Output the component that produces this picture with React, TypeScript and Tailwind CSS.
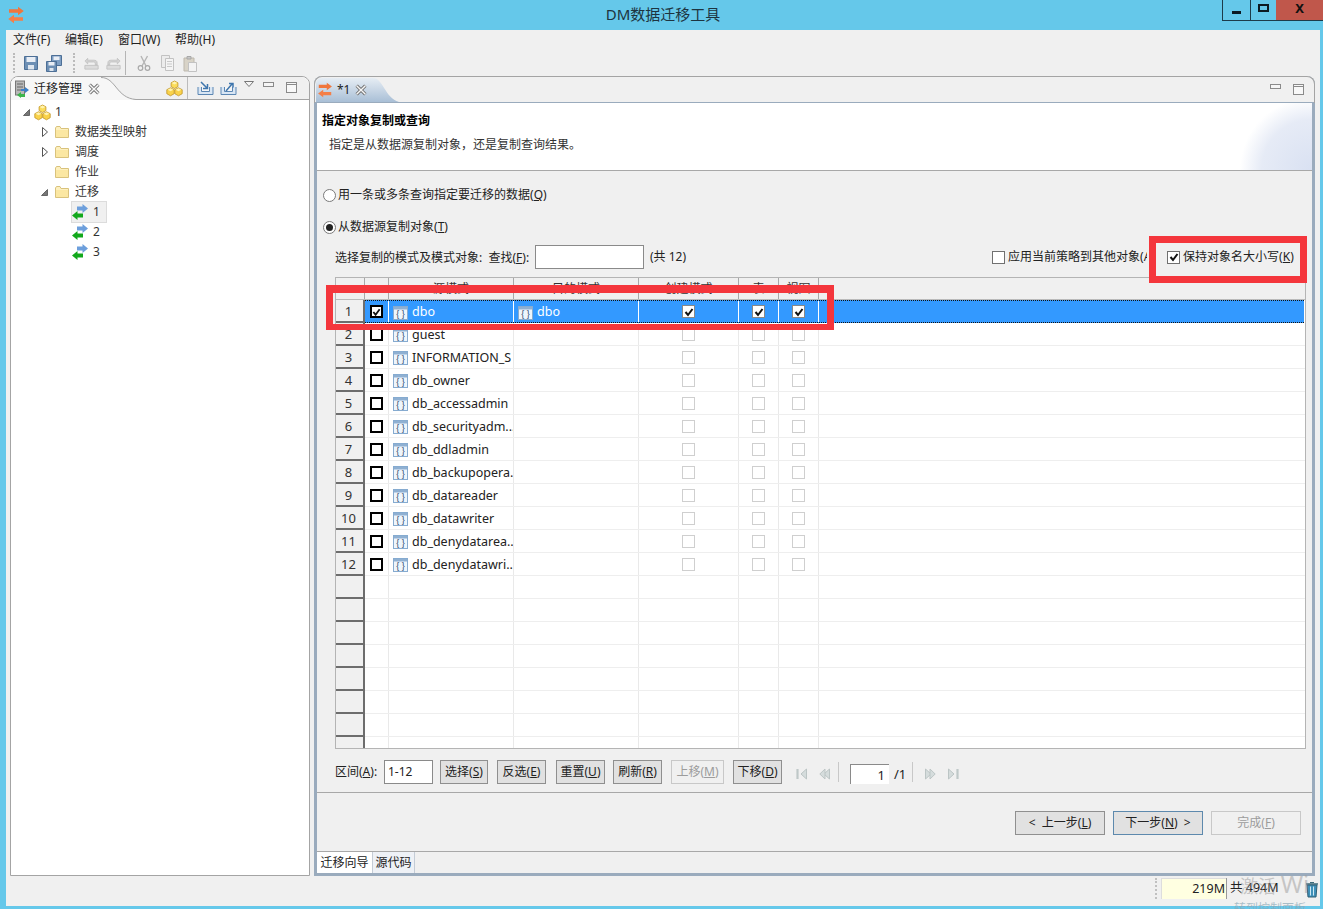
import React from "react";

const Logo = ({ s = 18 }: { s?: number }) => (
  <svg width={s} height={s} viewBox="0 0 18 18">
    <path d="M2 3.200h9V.8L16.800 5 11 9.200V6.800H2z" fill="#f0763c" />
    <path d="M16 11.200H7V8.800L1.200 13 7 17.200v-2.400h9z" fill="#f47f48" />
  </svg>
);

const Folder = () => (
  <svg width="16" height="14" viewBox="0 0 16 14">
    <path d="M1.500 3V12.500H14.500V3.500H7L6 1.500H2.500z" fill="#fdf0bf" stroke="#d9c27c" />
    <path d="M2 5h12v7H2z" fill="#fbe7a2" />
  </svg>
);

const Cubes = () => (
  <svg width="17" height="17" viewBox="0 0 17 16">
    <g stroke="#c09426" strokeWidth=".8">
      <path d="M8.500 .5l3.400 1.800v3.800L8.500 8 5.100 6.100V2.300z" fill="#fbdc5a" />
      <path d="M4.500 7.300l3.700 1.900v4L4.500 15.300.8 13.200v-4z" fill="#f9d24a" />
      <path d="M12.500 7.300l3.700 1.900v4l-3.700 2.100-3.700-2.100v-4z" fill="#f9d24a" />
    </g>
    <path d="M8.500 1l2.800 1.500-2.800 1.500-2.800-1.500zM4.500 7.800l2.900 1.500-2.900 1.500-2.900-1.500zM12.500 7.800l2.900 1.500-2.900 1.500-2.900-1.500z" fill="#fff3b0" />
  </svg>
);

const Migrate = () => (
  <svg width="16" height="16" viewBox="0 0 16 16">
    <path d="M5 2.500h5.500V0L16 4.500 10.500 9V6.500H5z" fill="#6d9fdc" />
    <path d="M11 9.500H5.500V7L0 11.500 5.500 16v-2.500H11z" fill="#12a81c" />
  </svg>
);

const Schema = () => (
  <svg width="15" height="14" viewBox="0 0 15 14">
    <rect x=".5" y=".5" width="14" height="13" fill="#eef5fc" stroke="#86abd0" />
    <rect x="1" y="1" width="13" height="2.500" fill="#8fb0d2" />
    <text x="7.500" y="11" textAnchor="middle" fontSize="9" fontFamily="Liberation Sans" fill="#2c4a6c">{"{ }"}</text>
  </svg>
);

const Save = () => (
  <svg width="16" height="16" viewBox="0 0 16 16">
    <path d="M1.500 1.500H14.500V14.500H1.500z" fill="#6d8fb4" stroke="#4d6f96" />
    <rect x="3.500" y="2" width="9" height="5" fill="#e9eef5" />
    <rect x="5" y="10" width="6" height="4.500" fill="#dfe6ee" />
  </svg>
);

const SaveAll = () => (
  <svg width="18" height="17" viewBox="0 0 18 17">
    <path d="M6.500 .5H16.500V10.500H6.500z" fill="#7e9fc4" stroke="#4d6f96" />
    <rect x="8.500" y="1.500" width="6" height="3.500" fill="#e9eef5" />
    <path d="M1.500 6.500H11.500V16.500H1.500z" fill="#6d8fb4" stroke="#4d6f96" />
    <rect x="3.500" y="7" width="6" height="3.500" fill="#e9eef5" />
    <rect x="4.500" y="13" width="4" height="3" fill="#dfe6ee" />
  </svg>
);

const Undo = ({ flip = false }: { flip?: boolean }) => (
  <svg width="17" height="16" viewBox="0 0 18 16" className={flip ? "-scale-x-100" : ""}>
    <path d="M2 10.500h14v4H2z" fill="#dcdcdc" stroke="#c4c4c4" />
    <path d="M5 3l-3 3 3 3V7h6c1.500 0 2 .7 2 2v1h2V8c0-2.500-1.500-3-4-3H5z" fill="#d2d2d2" stroke="#bcbcbc" strokeWidth=".7" />
  </svg>
);

const Cut = () => (
  <svg width="14" height="17" viewBox="0 0 14 17">
    <path d="M10.500 1L5 11M4 1l5 10" stroke="#b5b5b5" strokeWidth="1.400" fill="none" />
    <circle cx="3.500" cy="13" r="2.300" fill="none" stroke="#a8a8a8" strokeWidth="1.200" />
    <circle cx="10.500" cy="13" r="2.300" fill="none" stroke="#a8a8a8" strokeWidth="1.200" />
  </svg>
);

const Doc = () => (
  <svg width="15" height="16" viewBox="0 0 15 16">
    <path d="M1.500 .5h8v12h-8z" fill="#ececec" stroke="#c2c2c2" />
    <path d="M5.500 3.500h8v12h-8z" fill="#f4f4f4" stroke="#c2c2c2" />
    <path d="M7 6.500h5M7 9h5M7 11.500h5" stroke="#c9c9c9" />
  </svg>
);

const Paste = () => (
  <svg width="14" height="17" viewBox="0 0 14 17">
    <path d="M1 3h10v13H1z" fill="#d8d3c7" stroke="#bdb8ad" />
    <path d="M4 1.500h4V4H4z" fill="#c8c8c8" stroke="#a8a8a8" />
    <path d="M5.500 7.500h8v9h-8z" fill="#f3f3f3" stroke="#c2c2c2" />
  </svg>
);

const Import = ({ up = false }: { up?: boolean }) => (
  <svg width="17" height="16" viewBox="0 0 17 16">
    <path d="M1 7v7.500h15V7" fill="#d9e6f4" stroke="#5b86b3" />
    <path d="M4.500 7v4.500h8V7" fill="#f6f6f6" stroke="#5b86b3" />
    {up ? (
      <path d="M6 11L12 4M9 3.500h4v4" stroke="#3f76ad" strokeWidth="1.500" fill="none" />
    ) : (
      <path d="M4 2l6 6M10.500 4v4.500h-4.500" stroke="#3f76ad" strokeWidth="1.500" fill="none" />
    )}
  </svg>
);

const MinIcon = () => (
  <svg width="11" height="6" viewBox="0 0 11 6">
    <rect x=".5" y=".5" width="10" height="4" fill="#f5f5f5" stroke="#8a8a8a" />
  </svg>
);
const MaxIcon = () => (
  <svg width="11" height="11" viewBox="0 0 11 11">
    <rect x=".5" y=".5" width="10" height="10" fill="#f8f8f8" stroke="#8a8a8a" />
    <path d="M0 2.500h11" stroke="#8a8a8a" />
  </svg>
);
const Close = () => (
  <svg width="12" height="12" viewBox="0 0 11 11">
    <path d="M1.500 1.500l8 8m0-8l-8 8" stroke="#6f6f6f" strokeWidth="3" />
    <path d="M1.500 1.500l8 8m0-8l-8 8" stroke="#f7f7f7" strokeWidth="1.300" />
  </svg>
);

const Server = () => (
  <svg width="16" height="18" viewBox="0 0 16 18">
    <rect x="1.500" y="1" width="9" height="14" fill="#b8b8b8" stroke="#777" />
    <path d="M3 4h6M3 7h6M3 10h6" stroke="#666" />
    <path d="M7 9h4V7l4 3-4 3v-2H7z" fill="#3c80c8" />
    <path d="M11 14H7v-2l-4 3 4 3v-1h4z" fill="#3cb44a" />
  </svg>
);

const Nav = ({ dir }: { dir: "first" | "prev" | "next" | "last" }) => {
  const bar = dir === "first" ? "M1.500 2v10" : dir === "last" ? "M10.500 2v10" : "";
  const left = dir === "first" || dir === "prev";
  return (
    <svg width="12" height="14" viewBox="0 0 12 14">
      {bar && <path d={bar} stroke="#bfc8c8" strokeWidth="2.200" />}
      {left ? (
        <>
          <path d="M10.500 2L5 7l5.500 5z" fill="#d5dcdc" stroke="#bcc5c5" />
          {dir === "prev" && <path d="M6 2L.8 7 6 12z" fill="#d5dcdc" stroke="#bcc5c5" />}
        </>
      ) : (
        <>
          <path d="M1.500 2L7 7l-5.500 5z" fill="#d5dcdc" stroke="#bcc5c5" />
          {dir === "next" && <path d="M6 2l5.200 5L6 12z" fill="#d5dcdc" stroke="#bcc5c5" />}
        </>
      )}
    </svg>
  );
};

const Check = () => (
  <svg width="10" height="10" viewBox="0 0 10 10">
    <path d="M1.500 5l2.500 3 4.500-6" stroke="#111" strokeWidth="2" fill="none" />
  </svg>
);

const BoxBold = ({ on }: { on?: boolean }) => (
  <span className="flex h-[13px] w-[13px] items-center justify-center border-2 border-black bg-white">{on && <Check />}</span>
);
const BoxThin = ({ on }: { on?: boolean }) => (
  <span className={`flex h-[13px] w-[13px] items-center justify-center border bg-white ${on ? "border-[#888]" : "border-[#cfcfcf]"}`}>{on && <Check />}</span>
);
const FormBox = ({ on }: { on?: boolean }) => (
  <span className="flex h-[13px] w-[13px] shrink-0 items-center justify-center border border-[#707070] bg-white">{on && <Check />}</span>
);

const Radio = ({ on }: { on?: boolean }) => (
  <span className="flex h-[13px] w-[13px] shrink-0 items-center justify-center rounded-full border border-[#7a7a7a] bg-white">
    {on && <span className="h-[7px] w-[7px] rounded-full bg-[#222]" />}
  </span>
);

const Mn = ({ a, k }: { a: string; k: string }) => (
  <span>
    {a}(<u>{k}</u>)
  </span>
);

const Btn = ({ x, k, w, off, first, tail, blue }: { x: string; k: string; w: string; off?: boolean; first?: string; tail?: string; blue?: boolean }) => (
  <span
    className={`flex h-6 items-center justify-center whitespace-pre border text-xs ${w} ${
      off ? "border-[#c8c8c8] bg-[#f0f0f0] text-[#9c9c9c]" : blue ? "border-[#5d89ad] bg-[#e1e1e1] text-[#222]" : "border-[#8f8f8f] bg-[#e1e1e1] text-[#222]"
    }`}
  >
    {first}
    <Mn a={x} k={k} />
    {tail}
  </span>
);

const names = ["dbo", "guest", "INFORMATION_S", "db_owner", "db_accessadmin", "db_securityadm...", "db_ddladmin", "db_backupopera..", "db_datareader", "db_datawriter", "db_denydatarea..", "db_denydatawri..."];
const rows = Array.from({ length: 20 }, (_, i) => i);

const Cell = ({ w, children, sel, center }: { w: string; children?: React.ReactNode; sel?: boolean; center?: boolean }) => (
  <div className={`flex h-full shrink-0 items-center overflow-hidden whitespace-nowrap border-r ${w} ${center ? "justify-center" : ""} ${sel ? "border-white" : "border-[#e9e9e9]"}`}>{children}</div>
);

const Tree = ({ pad, twist, icon, label, sel }: { pad: string; twist?: "open" | "closed"; icon: React.ReactNode; label: string; sel?: boolean }) => (
  <div className={`flex h-5 items-center ${pad}`}>
    <span className="flex w-[11px] shrink-0 justify-center">
      {twist === "open" && (
        <svg width="7" height="7" viewBox="0 0 7 7"><path d="M6.500 .5V6.500H.5z" fill="#777" stroke="#666" /></svg>
      )}
      {twist === "closed" && (
        <svg width="6" height="10" viewBox="0 0 6 10"><path d="M.5 .5L5.500 5 .5 9.500z" fill="#fff" stroke="#555" /></svg>
      )}
    </span>
    <span className={`flex h-5 items-center gap-[5px] pr-[6px] ${sel ? "bg-[#f0f0f0] outline outline-[#dcdcdc]" : ""}`}>
      {icon}
      <span className="text-xs text-[#333]">{label}</span>
    </span>
  </div>
);

export default function App() {
  return (
    <div className="relative flex h-[909px] w-[1323px] flex-col overflow-hidden bg-[#65c8ea] font-['Noto_Sans','Noto_Sans_CJK_SC',sans-serif] text-xs text-[#222]">
      {/* title bar */}
      <div className="grid h-[30px] shrink-0 grid-cols-[1fr_auto_1fr]">
        <div className="pl-[7px] pt-[6px]"><Logo /></div>
        <div className="pl-[3px] pt-1 text-[15px] leading-5 text-[#1d3440]">DM数据迁移工具</div>
        <div className="flex h-[21px] justify-end">
          <span className="flex w-[28px] items-end justify-center border-b border-l border-[#1d3b4a] pb-[6px]"><span className="h-[3px] w-[9px] bg-[#0c1a22]" /></span>
          <span className="flex w-[26px] items-center justify-center border-b border-l border-[#1d3b4a] pb-1"><span className="h-[8px] w-[11px] border-2 border-[#0c1a22]" /></span>
          <span className="flex w-[47px] items-center justify-center border-b border-[#1d3b4a] bg-[#c0574b] pb-[2px] text-[13px] font-bold text-[#111]">X</span>
        </div>
      </div>

      <div className="mb-[3px] ml-[6px] mr-[3px] flex min-h-0 flex-1 flex-col bg-[#f0f0f0]">
        {/* menu */}
        <div className="flex h-5 shrink-0 items-center pl-[7px] text-xs">
          <span className="w-[52px]">文件(F)</span>
          <span className="w-[53px]">编辑(E)</span>
          <span className="w-[57px]">窗口(W)</span>
          <span>帮助(H)</span>
        </div>
        {/* toolbar */}
        <div className="flex h-[26px] shrink-0 items-center pl-[7px]">
          <span className="mr-[8px] h-5 border-l-2 border-dotted border-[#bbb]" />
          <Save />
          <span className="w-[6px]" />
          <SaveAll />
          <span className="ml-[10px] mr-[8px] h-5 border-l-2 border-dotted border-[#bbb]" />
          <Undo />
          <span className="w-[5px]" />
          <Undo flip />
          <span className="mx-[3px] h-6 border-l border-[#b5b5b5]" />
          <span className="w-[8px]" />
          <Cut />
          <span className="w-[9px]" />
          <Doc />
          <span className="w-[8px]" />
          <Paste />
        </div>

        {/* panels */}
        <div className="flex min-h-0 flex-1 gap-[4px] pl-[4px]">
          {/* left */}
          <div className="flex w-[300px] flex-col rounded-t-lg border border-[#a4a4a4] bg-white">
            <div className="relative flex h-[23px] shrink-0 items-center rounded-t-lg border-b border-[#a4a4a4] bg-[#f0f0f0]">
              <svg className="absolute bottom-[-1px] left-0" width="125" height="23" viewBox="0 0 125 23">
                <path d="M0 24V8Q0 0 8 0H90C105 0 105 21 125 22.500V24z" fill="#f7f7f7" stroke="none" />
                <path d="M90 .5C105 .5 105 21 125 22.500" fill="none" stroke="#a4a4a4" />
              </svg>
              <span className="relative ml-[3px] mt-[1px] flex items-center">
                <Server />
                <span className="ml-[4px] text-xs">迁移管理</span>
                <span className="ml-[6px]"><Close /></span>
              </span>
              <span className="relative ml-auto flex items-center">
                <Cubes />
                <span className="mx-[4px] h-[22px] border-l border-[#bbb]" />
                <span className="w-[5px]" />
                <Import />
                <span className="w-[6px]" />
                <Import up />
                <span className="ml-[7px] mr-[4px] mb-[8px]">
                  <svg width="10" height="6" viewBox="0 0 10 6"><path d="M.5 .5h9L5 5.500z" fill="#f5f5f5" stroke="#777" /></svg>
                </span>
                <span className="ml-[5px] mb-[6px]"><MinIcon /></span>
                <span className="ml-[12px] mr-[12px] mb-[2px]"><MaxIcon /></span>
              </span>
            </div>
            <div className="pt-[2px]">
              <Tree pad="pl-[10px]" twist="open" icon={<span className="ml-[2px] -mr-[1px]"><Cubes /></span>} label="1" />
              <Tree pad="pl-[28px]" twist="closed" icon={<span className="ml-[4px]"><Folder /></span>} label="数据类型映射" />
              <Tree pad="pl-[28px]" twist="closed" icon={<span className="ml-[4px]"><Folder /></span>} label="调度" />
              <Tree pad="pl-[28px]" icon={<span className="ml-[4px]"><Folder /></span>} label="作业" />
              <Tree pad="pl-[28px]" twist="open" icon={<span className="ml-[4px]"><Folder /></span>} label="迁移" />
              <Tree pad="pl-[50px]" icon={<Migrate />} label="1" sel />
              <Tree pad="pl-[50px]" icon={<Migrate />} label="2" />
              <Tree pad="pl-[50px]" icon={<Migrate />} label="3" />
            </div>
          </div>

          {/* right */}
          <div className="flex w-[1001px] flex-col rounded-t-lg border-x-[3px] border-b-[3px] border-[#9aabbd] bg-[#f0f0f0]">
            <div className="relative -mx-[3px] flex h-[27px] shrink-0 items-center rounded-t-lg border-x border-t border-[#a4a4a4] bg-[#f0f0f0]">
              <svg className="absolute left-0 top-0" width="90" height="25" viewBox="0 0 90 25">
                <defs>
                  <linearGradient id="tabg" x1="0" y1="0" x2="0" y2="1">
                    <stop offset="0" stopColor="#e6edf4" />
                    <stop offset="1" stopColor="#a9bfd6" />
                  </linearGradient>
                </defs>
                <path d="M1 25V7Q1 1 7 1H58C68 1 70 21 84 25z" fill="url(#tabg)" />
              </svg>
              <span className="relative ml-[2px] flex items-center">
                <Logo s={16} />
                <span className="ml-[4px] text-xs">*1</span>
                <span className="ml-[5px]"><Close /></span>
              </span>
              <span className="ml-auto mb-[6px] mr-[12px]"><MinIcon /></span>
              <span className="mr-[10px] mb-[2px]"><MaxIcon /></span>
              <span className="absolute inset-x-0 bottom-[-1px] h-[2px] bg-[#9aabbd]" />
            </div>

            {/* wizard header */}
            <div className="relative h-[68px] shrink-0 overflow-hidden border-b border-[#a8a8a8] bg-white pl-[5px]">
              <div className="absolute right-0 top-0 h-full w-[75px] bg-[radial-gradient(circle_72px_at_100%_100%,#d9e1f2_0%,#e6ebf6_70%,#ffffff_100%)]" />
              <div className="relative pt-[9px] text-xs font-bold leading-[18px] text-black">指定对象复制或查询</div>
              <div className="relative ml-[7px] mt-[6px] text-xs leading-[18px] text-[#333]">指定是从数据源复制对象，还是复制查询结果。</div>
            </div>

            {/* wizard body */}
            <div className="flex min-h-0 flex-1 flex-col text-xs">
              <div className="mt-[14px] flex h-5 items-center gap-[2px] pl-[6px]">
                <Radio />
                <Mn a="用一条或多条查询指定要迁移的数据" k="Q" />
              </div>
              <div className="mt-3 flex h-5 items-center gap-[2px] pl-[6px]">
                <Radio on />
                <Mn a="从数据源复制对象" k="T" />
              </div>
              <div className="mt-2 flex h-6 items-center pl-[18px]">
                <span className="w-[200px] whitespace-nowrap pt-[1px]">选择复制的模式及模式对象:&nbsp;&nbsp;查找(<u>F</u>):</span>
                <span className="h-6 w-[109px] shrink-0 border border-[#8a8a8a] bg-white" />
                <span className="ml-[6px]">(共 12)</span>
                <span className="ml-[306px] flex items-center gap-[3px] whitespace-nowrap">
                  <FormBox />
                  <span className="w-[139px] overflow-hidden">应用当前策略到其他对象(A)</span>
                </span>
                <span className="ml-5 flex items-center gap-[3px] whitespace-nowrap">
                  <FormBox on />
                  <Mn a="保持对象名大小写" k="K" />
                </span>
              </div>

              {/* table */}
              <div className="ml-[18px] mr-[6px] mt-2 h-[472px] shrink-0 overflow-hidden border border-[#b4b4b4] bg-white">
                <div className="flex h-[22px] border-b border-[#bbb] bg-[#f0f0f0] text-[#333]">
                  {[
                    ["w-[29px]", ""],
                    ["w-[24px]", ""],
                    ["w-[125px]", "源模式"],
                    ["w-[125px]", "目的模式"],
                    ["w-[100px]", "创建模式"],
                    ["w-[40px]", "表"],
                    ["w-[40px]", "视图"],
                  ].map(([w, t], i) => (
                    <div key={i} className={`flex h-full shrink-0 items-center justify-center border-r border-[#a8a8a8] ${w}`}>{t}</div>
                  ))}
                </div>
                {rows.map((i) => {
                  const sel = i === 0;
                  const name = names[i];
                  return (
                    <div key={i} className={`flex h-[23px] text-[12.500px] ${sel ? "text-white" : "text-[#222]"}`}>
                      <div className="flex h-full w-[29px] shrink-0 items-center justify-center border-b-2 border-r-2 border-[#6d6d6d] bg-[#f0f0f0] pr-[2px] pt-[3px] text-[13px] text-[#333]">{name ? i + 1 : ""}</div>
                      <div className={`flex min-w-0 flex-1 ${sel ? "mr-[1px] border-y border-dotted border-[#111] bg-[#3399ff]" : "border-b border-[#eee]"}`}>
                        <Cell w="w-[24px]" sel={sel} center>{name && <BoxBold on={sel} />}</Cell>
                        <Cell w="w-[125px]" sel={sel}>
                          {name && <span className="ml-[4px] mr-[4px] mt-[2px] shrink-0"><Schema /></span>}
                          <span className="pt-[2px]">{name}</span>
                        </Cell>
                        <Cell w="w-[125px]" sel={sel}>
                          {sel && <span className="ml-[4px] mr-[4px] mt-[2px] shrink-0"><Schema /></span>}
                          {sel && <span className="pt-[2px]">dbo</span>}
                        </Cell>
                        <Cell w="w-[100px]" sel={sel} center>{name && <BoxThin on={sel} />}</Cell>
                        <Cell w="w-[40px]" sel={sel} center>{name && <BoxThin on={sel} />}</Cell>
                        <Cell w="w-[40px]" sel={sel} center>{name && <BoxThin on={sel} />}</Cell>
                      </div>
                    </div>
                  );
                })}
              </div>

              {/* paging */}
              <div className="mt-[11px] flex h-6 items-center pl-[18px]">
                <span className="w-[49px] whitespace-nowrap">区间(<u>A</u>):</span>
                <span className="flex h-6 w-[49px] items-center border border-[#8a8a8a] bg-white pl-[3px]">1-12</span>
                <span className="w-[7px]" />
                <Btn x="选择" k="S" w="w-[48px]" />
                <span className="w-[9px]" />
                <Btn x="反选" k="E" w="w-[49px]" />
                <span className="w-[10px]" />
                <Btn x="重置" k="U" w="w-[49px]" />
                <span className="w-[8px]" />
                <Btn x="刷新" k="R" w="w-[49px]" />
                <span className="w-[9px]" />
                <Btn x="上移" k="M" w="w-[53px]" off />
                <span className="w-[9px]" />
                <Btn x="下移" k="D" w="w-[49px]" />
                <span className="ml-[14px] mt-1"><Nav dir="first" /></span>
                <span className="ml-[11px] mt-1"><Nav dir="prev" /></span>
                <span className="ml-[7px] h-5 border-l border-[#c8c8c8]" />
                <span className="ml-[11px] mt-1 flex h-5 w-[39px] items-center justify-end border-l border-t border-[#8a8a8a] bg-white pr-[4px] pt-[2px] text-[13px]">1</span>
                <span className="ml-[5px] mt-[6px] w-[13px] text-[13px]">/1</span>
                <span className="ml-[5px] h-5 border-l border-[#c8c8c8]" />
                <span className="ml-[11px] mt-1"><Nav dir="next" /></span>
                <span className="ml-[11px] mt-1"><Nav dir="last" /></span>
              </div>
              <div className="mt-2 h-px shrink-0 bg-[#a8a8a8]" />
              <div className="mt-[18px] flex h-6 justify-end gap-2 pr-[11px]">
                <Btn x="上一步" k="L" w="w-[90px]" first="<  " />
                <Btn x="下一步" k="N" w="w-[90px]" tail="  >" blue />
                <Btn x="完成" k="F" w="w-[90px]" off />
              </div>
              <div className="mt-auto flex h-[22px] shrink-0 items-stretch border-t border-[#a8a8a8]">
                <span className="flex w-[55px] items-center justify-center bg-white text-xs">迁移向导</span>
                <span className="flex w-[43px] items-center justify-center border-x border-[#c4ccd6] bg-[#eef1f6] text-xs">源代码</span>
              </div>
            </div>
          </div>
        </div>

        {/* status */}
        <div className="flex h-[30px] shrink-0 justify-end pr-[1px] pt-[2px]">
          <span className="mr-[4px] h-[21px] border-l-2 border-dotted border-[#c0c0c0]" />
          <span className="flex h-[21px] w-[144px] items-stretch text-[12.500px] text-[#222]">
            <span className="flex w-[65px] items-center justify-end border-l border-t border-[#ddd] bg-[#ffffe1] pr-[1px]">219M</span>
            <span className="flex flex-1 items-center whitespace-nowrap border-l border-[#999] pl-[3px]">共 494M</span>
          </span>
          <span className="mt-[3px]">
            <svg width="14" height="17" viewBox="0 0 14 17">
              <path d="M1 3h12" stroke="#3d6a7a" strokeWidth="1.500" />
              <path d="M5 1.500h4" stroke="#3d6a7a" />
              <path d="M2 4h10l-1 12H3z" fill="#3f90b8" stroke="#2f5f75" />
              <path d="M5.500 5.500v9M8.500 5.500v9" stroke="#cde8f4" />
            </svg>
          </span>
        </div>
      </div>

      {/* red marks */}
      <div className="absolute left-[326px] top-[285px] h-[45px] w-[508px] border-x-[7px] border-b-[6px] border-t-[8px] border-[#f4363c]" />
      <div className="absolute left-[1149px] top-[236px] h-[47px] w-[158px] border-[7px] border-[#f4363c]" />
      {/* watermark */}
      <div className="absolute left-[1240px] top-[872px] whitespace-nowrap text-[18px] leading-6 text-[#9a9a9a]/50">激活 <span className="text-[24px]">Wi</span></div>
      <div className="absolute left-[1234px] top-[901px] whitespace-nowrap text-xs leading-4 text-[#8aa7b5]/70">转到控制面板</div>
    </div>
  );
}
